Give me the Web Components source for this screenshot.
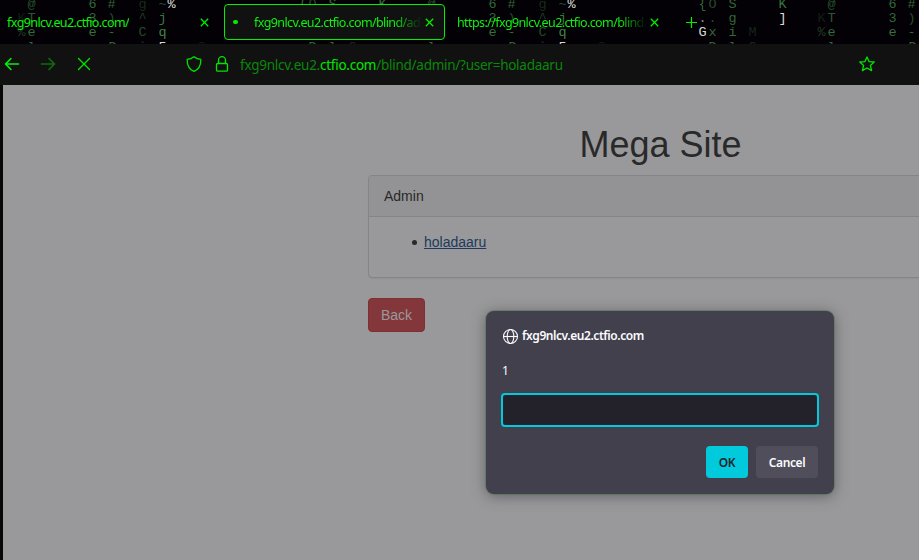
<!DOCTYPE html>
<html lang="en"><head><meta charset="utf-8"><title>Mega Site</title>
<style>
html,body{margin:0;height:560px;overflow:hidden;background:#000}
</style></head><body>
<browser-window></browser-window>
<script>
const define=(name,html,setup)=>customElements.define(name,class extends HTMLElement{
  connectedCallback(){
    if(this.shadowRoot)return;
    const t=document.createElement('template');t.innerHTML=html;
    this.attachShadow({mode:'open'}).append(t.content.cloneNode(true));
    if(setup)setup(this,this.shadowRoot);
  }
});

/* Falling code behind the tab strip; one tile is 400px wide. */
const rain=[
 [31,8,'@',.55],[31,22,'T',.6],[21,22,'K',.2],[21,36,'%',.4],[31,36,'e',.7],[31,51,'l',.7],
 [92,8,'6',.7],[92,22,'3',.7],[92,36,'e',.75],[111,8,'#',.7],[111,22,')',.5],[111,36,'-',.7],[112,51,'D',.7],
 [142,8,'g',.3],[142,22,'^',.4],[142,36,'C',.5],[142,51,'`',.5],
 [162,8,'~',.5],[162,22,'j',.8],[162,36,'q',.9],[162,51,'5',2],[171,8,'%',2],[191,51,'o',.2],[201,51,'2',.2],
 [302,8,'{',.7],[312,8,'O',.5],[302,22,'.',1.2],[312,22,'.',.5],[302,36,'G',2],[312,36,'x',.7],[312,51,'D',.7],
 [332,8,'S',.7],[332,22,'g',.7],[332,36,'i',.7],[332,51,'l',.7],[352,36,'M',.25],[352,51,'O',.3],
 [382,8,'K',.8],[382,22,']',2]
];
define('code-rain',`<style>:host{display:block;position:absolute;inset:0;overflow:hidden;background:#030106}
svg{display:block}text{font:13.5px "Liberation Mono",monospace;text-anchor:middle}</style><svg width="919" height="44" aria-hidden="true"></svg>`,(h,r)=>{
  const svg=r.querySelector('svg');
  for(let x=0;x<919;x+=400)for(const [dx,y,c,a] of rain){
    if(x+dx>925)continue;
    const t=document.createElementNS('http://www.w3.org/2000/svg','text');
    t.setAttribute('x',x+dx+.5);t.setAttribute('y',y);t.textContent=c;
    t.setAttribute('fill',a>1?(a>1.5?'#d6dcd6':'#8a908a'):`rgba(72,150,76,${a})`);
    svg.append(t);
  }
});

define('browser-tab',`<style>
:host{box-sizing:border-box;display:flex;align-items:center;height:36px;color:#0ef00e;border:1px solid transparent;border-radius:4px;position:relative;font:12.5px/18px "Noto Sans","Open Sans",sans-serif}
:host([selected]){background:#111;border-color:#00f000}
.title{flex:none;overflow:hidden;white-space:nowrap;box-sizing:border-box;letter-spacing:-.61px;padding-top:1px}
:host([fade]) .title{-webkit-mask-image:linear-gradient(90deg,#000 calc(100% - 28px),transparent)}
svg{display:block;flex:none;margin-left:auto}
.busy{width:5px;height:4px;border-radius:2px;background:#00f000;margin:0 16px 1px 8px}
:host(:not([selected])) .busy{display:none}
</style><i class="busy"></i><span class="title"><slot></slot></span><svg width="9" height="9" viewBox="0 0 9 9"><path d="M.8.8 8.2 8.2M8.2.8.8 8.2" stroke="#00f000" stroke-width="1.3" fill="none"/></svg>`);

define('tab-strip',`<style>
:host{display:block;position:relative;height:44px}
.row{position:relative;display:flex;box-sizing:border-box;height:44px;padding-top:4px}
browser-tab{box-sizing:border-box;flex:none}
.a{width:210px;margin-left:4px;padding:0 4px 0 2px;margin-right:10px}
.b{width:221px;padding-right:10px}
.c{width:220px;padding:0 5px 0 11px}
.plus{margin:12px 0 0 20px;display:block}
</style><code-rain></code-rain><div class="row">
<browser-tab class="a">fxg9nlcv.eu2.ctfio.com/</browser-tab>
<browser-tab class="b" selected fade><span style="display:block;width:168px">fxg9nlcv.eu2.ctfio.com/blind/admin</span></browser-tab>
<browser-tab class="c" fade><span style="display:block;width:190px">https://fxg9nlcv.eu2.ctfio.com/blind/</span></browser-tab>
<svg class="plus" width="13" height="13" viewBox="0 0 13 13"><path d="M6.5 1v11M1 6.5h11" stroke="#00f000" stroke-width="1.2"/></svg></div>`);

define('nav-bar',`<style>
:host{display:flex;align-items:center;box-sizing:border-box;height:41px;background:#111;padding:0 44px 1px 4px;border-bottom:1px solid #061a06;font:13.5px/20px "Noto Sans","Open Sans",sans-serif;color:#0a870a}
svg{display:block;flex:none;fill:none;stroke:#00e400;stroke-width:1.3;stroke-linecap:round;stroke-linejoin:round}
.fwd{margin-left:20px;opacity:.45}.stop{margin-left:20px}.shield{margin-left:94px}.lock{margin-left:12px}
.url{margin-left:10px;padding-top:2px;white-space:nowrap;letter-spacing:-.26px}b{font-weight:400;color:#00e800}.star{margin-left:auto}
</style>
<svg width="16" height="16" viewBox="0 0 16 16" style="stroke:#00f500;stroke-width:1.6"><path d="M14.5 8H1.5M7 2.5 1.5 8 7 13.5"/></svg>
<svg class="fwd" width="16" height="16" viewBox="0 0 16 16" style="stroke-width:1.6"><path d="M1.5 8h13M9 2.5 14.5 8 9 13.5"/></svg>
<svg class="stop" width="16" height="16" viewBox="0 0 16 16"><path d="M2.5 2.5l11 11M13.5 2.5l-11 11"/></svg>
<svg class="shield" width="16" height="16" viewBox="0 0 16 16"><path d="M8 .7C6 2.3 3.5 3.2 1.2 3.4 1 9 3 13.3 8 15.4c5-2.1 7-6.4 6.8-12C12.500 3.200 10 2.300 8 .7Z"/></svg>
<svg class="lock" width="16" height="16" viewBox="0 0 16 16"><rect x="2.500" y="7.500" width="11" height="7.700" rx="1.200"/><path d="M4.500 7.500V4.200a3.500 3.500 0 0 1 7 0v3.300"/></svg>
<span class="url">fxg9nlcv.eu2.<b>ctfio.com</b>/blind/admin/?user=holadaaru</span>
<svg class="star" width="16" height="16" viewBox="0 0 16 16"><path d="M8 .9 10 5.600 15.200 6 11.400 9.400 12.600 14.600 8 12 3.400 14.600 4.600 9.400 .8 6 6 5.600Z"/></svg>`);

define('admin-panel',`<style>
:host{display:block;box-sizing:border-box;width:625px;height:103px;border:1px solid #858587;border-radius:4px;background:#99999b;box-shadow:0 1px 1px rgba(0,0,0,.05)}
header{box-sizing:border-box;height:41px;padding:10px 15px;border-bottom:1px solid #858587;background:#939395;border-radius:3px 3px 0 0}
.body{padding:15px}</style><header><slot name="heading"></slot></header><div class="body"><slot></slot></div>`);

define('mega-site',`<style>
:host{display:block;height:475px;background:#99999b;border-left:3px solid #060906;overflow:hidden;font:14px/20px "Liberation Sans",Arial,sans-serif;color:#292929}
main{width:585px;margin-left:365px}
h1{font-size:36px;line-height:40px;font-weight:400;margin:40px 0 10px;text-align:center}
ul{margin:0 0 10px;padding-left:40px;list-style:none}
li::before{content:"";display:inline-block;width:5px;height:5px;border-radius:50%;background:#292929;margin:0 7px 0 -12px;vertical-align:2px}
a{color:#203a5c;text-decoration:underline}
button{display:block;box-sizing:border-box;width:57px;height:34px;margin:20px 0 0;border:1px solid #7f2f2f;border-radius:4px;background:#84373a;color:#99999b;font:14px/20px "Liberation Sans",Arial,sans-serif;padding:0}
</style><main><h1>Mega Site</h1><admin-panel><span slot="heading">Admin</span><ul><li><a href="#">holadaaru</a></li></ul></admin-panel><button>Back</button></main>`);

define('prompt-dialog',`<style>
:host{position:absolute;left:486px;top:311px;box-sizing:border-box;width:348px;height:183px;border-radius:8px;background:#42404d;box-shadow:0 0 0 1px rgba(60,120,60,.4),0 2px 14px rgba(58,57,68,.6);padding:16px;color:#fbfbfe;font:12px/18px "Noto Sans","Open Sans",sans-serif}
.origin{display:flex;align-items:center;gap:3px;font-weight:600;letter-spacing:-.43px}
svg{display:block;fill:none;stroke:#fbfbfe;stroke-width:1.1}
p{margin:17px 0 0}
input{display:block;box-sizing:border-box;width:318px;height:34px;margin:13px 0 0 -1px;border:2px solid #00cadb;border-radius:4px;background:#23222b;padding:0 8px;outline:0}
.actions{display:flex;justify-content:flex-end;gap:8px;margin-top:19px}
button{box-sizing:border-box;height:32px;border:0;border-radius:4px;padding:1px 0 0;font:600 12px/18px "Noto Sans","Open Sans",sans-serif;letter-spacing:-.4px;background:#504e5a;color:#fbfbfe;width:62px}
.ok{width:42px;background:#00cadb;color:#23222b}
</style><div class="origin"><svg width="17" height="17" viewBox="0 0 17 17"><circle cx="8.500" cy="8.500" r="7"/><ellipse cx="8.500" cy="8.500" rx="3.300" ry="7"/><path d="M1.500 8.500h14"/></svg><span>fxg9nlcv.eu2.ctfio.com</span></div>
<p>1</p><input aria-label="1"><div class="actions"><button class="ok">OK</button><button>Cancel</button></div>`);

define('browser-window',`<style>:host{display:block;position:relative;width:919px;height:560px;overflow:hidden}</style>
<tab-strip></tab-strip><nav-bar></nav-bar><mega-site></mega-site><prompt-dialog></prompt-dialog>`);
</script></body></html>
